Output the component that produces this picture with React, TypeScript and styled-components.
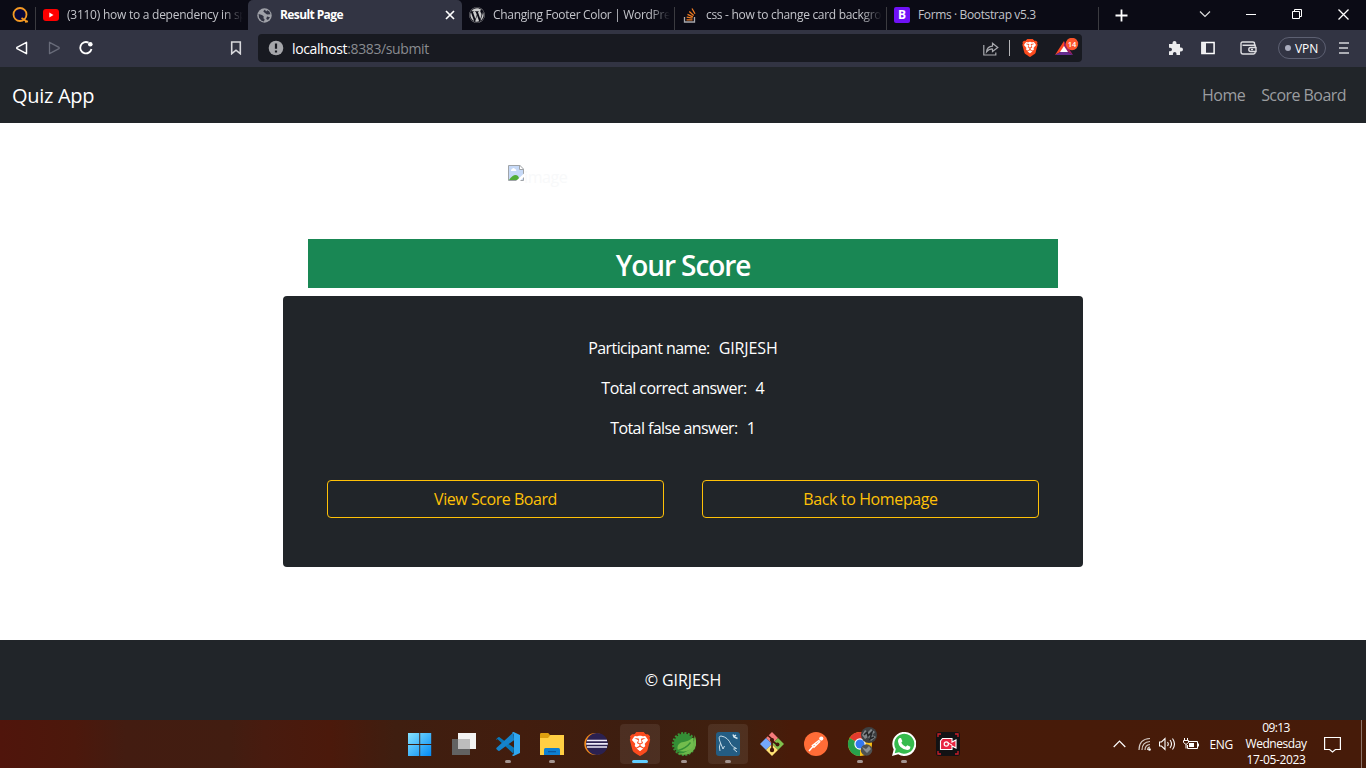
import React from "react";
import styled, { createGlobalStyle } from "styled-components";
import { FaWordpress } from "react-icons/fa";
import { SiBrave } from "react-icons/si";

const GlobalStyle = createGlobalStyle`
  * { box-sizing: border-box; }
  body { margin: 0; background: #fff; overflow: hidden; }
  p, h2 { margin: 0; }
  svg { display: block; flex: none; }
`;

const Screen = styled.div`
  width: 1366px;
  height: 768px;
  display: flex;
  flex-direction: column;
  font-family: "Open Sans", "Noto Sans", sans-serif;
`;

/* text with adjustable tracking */
const Label = styled.span<{ $track?: number }>`
  letter-spacing: ${(p) => p.$track ?? 0}px;
  white-space: nowrap;
`;

/* ---------- browser chrome ---------- */
const TabStrip = styled.div`
  height: 30px;
  flex: none;
  display: flex;
  background: #0b0b15;
  color: #c3c4ca;
  font-size: 12px;
`;
const PinnedTab = styled.div`
  width: 36px;
  padding: 7px 0 0 12px;
  display: flex;
  align-items: flex-start;
  background: linear-gradient(#3b3b40, #3b3b40) 35px 7px / 1px 23px no-repeat;
`;
const Tab = styled.div<{ $width: number; $active?: boolean; $divider?: boolean; $pad: number; $gap: number }>`
  width: ${(p) => p.$width}px;
  padding: 0 5px 0 ${(p) => p.$pad}px;
  display: flex;
  align-items: center;
  gap: ${(p) => p.$gap}px;
  border-radius: ${(p) => (p.$active ? "5px 5px 0 0" : "0")};
  color: ${(p) => (p.$active ? "#fff" : "inherit")};
  font-weight: ${(p) => (p.$active ? 700 : 400)};
  background: ${(p) =>
    p.$active
      ? "#323443"
      : p.$divider
      ? "linear-gradient(#3b3b40, #3b3b40) 100% 7px / 1px 23px no-repeat"
      : "none"};
`;
const TabTitle = styled.div<{ $track: number; $fade?: boolean }>`
  flex: 1;
  overflow: hidden;
  white-space: nowrap;
  line-height: 30px;
  letter-spacing: ${(p) => p.$track}px;
  mask-image: ${(p) => (p.$fade ? "linear-gradient(90deg, #000 calc(100% - 20px), transparent)" : "none")};
`;
const NewTab = styled.div`
  width: 83px;
  padding: 9px 0 0 16px;
`;
const WindowButton = styled.div`
  width: 46px;
  display: flex;
  align-items: center;
  justify-content: center;
  padding-bottom: 2px;
`;
const Toolbar = styled.div`
  height: 37px;
  flex: none;
  display: flex;
  align-items: center;
  padding: 0 16px 1px 14px;
  background: #323443;
`;
const ToolSlot = styled.div<{ $width: number }>`
  width: ${(p) => p.$width}px;
  display: flex;
`;
const AddressBar = styled.div`
  width: 824px;
  height: 28px;
  border-radius: 4px;
  background: #181a21;
  display: flex;
  align-items: center;
  padding: 0 2px 0 10px;
  font-size: 14px;
  color: #898b90;
  b { font-weight: 400; color: #fff; }
`;
const AddressText = styled.div`
  flex: 1;
  padding-left: 8px;
  letter-spacing: -0.38px;
`;
const AddressDivider = styled.i`
  width: 1px;
  height: 16px;
  background: #b5b5b8;
  margin: 0 11px 0 10px;
`;
const RewardsIcon = styled.svg`
  margin-left: 16px;
`;
const Vpn = styled.div`
  width: 48px;
  height: 22px;
  border: 1px solid #5d6072;
  border-radius: 11px;
  display: flex;
  align-items: center;
  gap: 4px;
  padding-left: 6px;
  color: #fff;
  font-size: 12px;
  letter-spacing: -0.1px;
  &::before {
    content: "";
    width: 6px;
    height: 6px;
    border-radius: 50%;
    background: #aaadbe;
  }
`;

/* ---------- page ---------- */
const Navbar = styled.nav`
  height: 56px;
  flex: none;
  display: flex;
  align-items: center;
  padding: 0 20px 0 12px;
  background: #212529;
  color: #fff;
`;
const Brand = styled.div`
  flex: 1;
  font-size: 20px;
  line-height: 30px;
  padding-top: 2px;
  letter-spacing: -0.3px;
`;
const NavLink = styled.a<{ $track: number }>`
  color: #9b9da0;
  font-size: 16px;
  line-height: 24px;
  margin-left: 16px;
  padding-bottom: 1px;
  letter-spacing: ${(p) => p.$track}px;
`;
const Main = styled.main`
  height: 517px;
  flex: none;
  display: flex;
  flex-direction: column;
  align-items: center;
  padding-top: 42px;
`;
const BrokenImage = styled.div`
  width: 350px;
  height: 74px;
  display: flex;
  align-items: flex-start;
  color: #f8f9fa;
  font-size: 16px;
  line-height: 24px;
`;
const ScoreTitle = styled.h2`
  width: 750px;
  height: 49px;
  background: #198754;
  color: #fff;
  text-align: center;
  font-size: 28px;
  font-weight: 600;
  line-height: 53px;
  letter-spacing: -1.1px;
`;
const Card = styled.section`
  width: 800px;
  height: 271px;
  margin-top: 8px;
  padding: 40px 44px 0;
  border-radius: 4px;
  background: #212529;
  color: #fff;
  font-size: 16px;
`;
const ResultLine = styled.p<{ $track: number }>`
  height: 40px;
  line-height: 24px;
  text-align: center;
  letter-spacing: ${(p) => p.$track}px;
  span { margin-left: 9px; letter-spacing: -0.1px; }
`;
const Actions = styled.div`
  display: flex;
  justify-content: space-between;
  padding-top: 24px;
`;
const OutlineButton = styled.button<{ $track: number }>`
  width: 337px;
  height: 38px;
  padding: 0 0 1px;
  border: 1px solid #ffc107;
  border-radius: 4px;
  background: transparent;
  color: #ffc107;
  font: 16px/24px "Open Sans", sans-serif;
  letter-spacing: ${(p) => p.$track}px;
`;
const Footer = styled.footer`
  height: 80px;
  flex: none;
  background: #212529;
  color: #fff;
  text-align: center;
  font-size: 16px;
  line-height: 80px;
  letter-spacing: -0.08px;
`;

/* ---------- taskbar ---------- */
const Taskbar = styled.div`
  height: 48px;
  flex: none;
  display: flex;
  justify-content: space-between;
  color: #fff;
  font-size: 12px;
  background: linear-gradient(90deg, #50150c 0, #4c180c 75px, #431c11 125px, #421d11 230px, #481b0f 265px, #4b190b 330px, #3f1e10 395px, #421d0e 520px, #3d1e10 640px, #40200e 735px, #481b09 790px, #461b09 1366px);
`;
const Apps = styled.div`
  display: flex;
  padding-left: 398px;
`;
const AppSlot = styled.div<{ $open?: boolean; $active?: boolean; $tile?: boolean }>`
  width: 40px;
  height: 40px;
  margin: 4px 2px;
  border-radius: 4px;
  display: flex;
  flex-direction: column;
  align-items: center;
  padding-top: 8px;
  background: ${(p) => (p.$tile ? "rgba(255,255,255,0.08)" : "transparent")};
  &::after {
    content: "";
    margin-top: 4px;
    width: ${(p) => (p.$active ? 16 : 6)}px;
    height: 3px;
    border-radius: 1.5px;
    background: ${(p) => (p.$active ? "#60cdff" : p.$open ? "#a3948f" : "transparent")};
  }
`;
const Tray = styled.div`
  display: flex;
  align-items: center;
`;
const TrayIcon = styled.div<{ $right: number }>`
  margin-right: ${(p) => p.$right}px;
`;
const Clock = styled.div`
  width: 64px;
  margin: 0 16px 0 11px;
  display: flex;
  flex-direction: column;
  align-items: center;
  line-height: 16px;
`;
const ShowDesktop = styled.i`
  width: 5px;
  height: 48px;
  margin-left: 20px;
  border-left: 1px solid #8c736a;
`;

const Brave = ({ size }: { size: number }) => (
  <svg width={size} height={size} viewBox="0 0 24 24">
    <path d="M7 2h10l4 5-3 11-6 4-6-4L3 7z" fill="#fff" />
    <SiBrave size={24} color="#fb4b1e" />
  </svg>
);

const QIcon = () => (
  <svg width="17" height="16" viewBox="0 0 17 16">
    <circle cx="8" cy="7.5" r="6.5" fill="#07073a" stroke="#f59a23" strokeWidth="1.8" />
    <path d="M9.5 11 15.5 15M13 14.8l3-.4" stroke="#f59a23" strokeWidth="1.8" />
  </svg>
);

const Globe = () => (
  <svg width="15" height="15" viewBox="0 0 15 15">
    <circle cx="7.5" cy="7.5" r="7.2" fill="#9fa1a8" />
    <path d="M8 1.4 6.2 3.2 8 5 10 6.5 13.5 6.3 12.4 3.4 10.4 2.2 9 3.5zM1.6 6 5 7 6.8 8.4 6.4 10.2 7.6 11.3 7 13.4 4.5 12.7 2 9.7zM10 8.4 13 9.2 11 12 9.2 11z" fill="#323443" />
  </svg>
);

const Bootstrap = styled.div`
  width: 16px;
  height: 16px;
  border-radius: 2px;
  background: #7012f7;
  color: #fff;
  font-size: 12px;
  line-height: 16px;
  font-weight: 700;
  text-align: center;
`;

const VSCode = () => (
  <svg width="24" height="24" viewBox="0 0 24 24">
    <path d="M1.3 7.1 17.5 21.8 18 15.8 3.2 5.1Q2.5 4.9 1.9 5.5L.3 7Q0 7.5.3 8z" fill="#0877b9" />
    <path d="M.3 16 17.5.2 18 8.2 3.2 18.9Q2.5 19.1 1.9 18.5L.3 17Z" fill="#1583cb" />
    <path d="M17.6 0 24 3V21L17.6 24Q16.4 24 16 22.7 18 23 18 21V3Q18 1 16 1.3 16.4 0 17.6 0z" fill="#2fa7f1" />
  </svg>
);

const apps: { name: string; open?: boolean; active?: boolean; tile?: boolean; icon: React.ReactNode }[] = [
  {
    name: "start",
    icon: (
      <svg width="24" height="24" viewBox="0 0 24 24">
        <defs>
          <linearGradient id="win" x1="0" y1="0" x2="24" y2="24" gradientUnits="userSpaceOnUse">
            <stop stopColor="#8ae5ff" /><stop offset="1" stopColor="#0088f4" />
          </linearGradient>
        </defs>
        <path d="M0 1h11.3v11H0zM12.2 1h11v11h-11zM0 13h11.3v11H0zM12.2 13h11v11h-11z" fill="url(#win)" />
      </svg>
    ),
  },
  {
    name: "tasks",
    icon: (
      <svg width="24" height="24" viewBox="0 0 24 24">
        <path d="M6 1h18v16H6z" fill="#f3f3f3" />
        <path d="M0 7h18v16H0z" fill="#626262" />
        <path d="M6 7h12v10H6z" fill="#bdbdbd" />
      </svg>
    ),
  },
  { name: "code", open: true, icon: <VSCode /> },
  {
    name: "files",
    open: true,
    icon: (
      <svg width="24" height="24" viewBox="0 0 24 24">
        <path d="M0 2.2Q0 1 1.2 1h7L10 3h13v5H0z" fill="#dda010" />
        <path d="M0 6h8l2.5-3H24v20H0z" fill="#ffcf43" />
        <path d="M4 23v-5.5Q4 16 5.5 16h13q1.5 0 1.5 1.5V23z" fill="#0d7fd1" />
        <path d="M8 19h8v1.3H8z" fill="#0b579d" />
      </svg>
    ),
  },
  {
    name: "eclipse",
    icon: (
      <svg width="24" height="24" viewBox="0 0 24 24">
        <circle cx="11.3" cy="12" r="11" fill="#f28a1c" />
        <circle cx="13" cy="12" r="11" fill="#2b2150" />
        <path d="M3 8.5h20M2.3 11.8h21.5M3 15h20" stroke="#eeeaf7" strokeWidth="1.7" />
      </svg>
    ),
  },
  { name: "brave", open: true, active: true, tile: true, icon: <Brave size={24} /> },
  {
    name: "spring",
    open: true,
    icon: (
      <svg width="24" height="24" viewBox="0 0 24 24">
        <circle cx="12" cy="12" r="10.8" fill="none" stroke="#389536" strokeWidth="2.4" strokeDasharray="2 1.4" />
        <circle cx="12" cy="12" r="10.4" fill="#348f36" />
        <path d="M22.5 3Q26.5 13 21 19 14 25.5 4.5 21 11 22.5 17 18 23 12 22.5 3z" fill="#6cb64a" />
        <path d="M21 5.5Q23 13 19 17 14 21 6 18.5 4 13 9 10.5 17 9.5 21 5.5z" fill="#72bd4d" />
        <path d="M6 18.5Q14 16.5 18.5 10.5" stroke="#348f36" strokeWidth="1.3" fill="none" />
      </svg>
    ),
  },
  {
    name: "workbench",
    open: true,
    tile: true,
    icon: (
      <svg width="24" height="24" viewBox="0 0 24 24">
        <rect width="24" height="24" rx="3" fill="#245d83" />
        <path d="M4 19Q2.5 15 4.5 11 1.5 4 5 4 12 5 15 12.5 17 15 20.5 16.5L17.5 17 21 20M4.5 11 7 17 8.5 14" fill="none" stroke="#c5dbe7" strokeWidth="1" />
        <path d="M17 2.5 18 5 21.5 6.5M20 3 17.5 5" stroke="#d7e7ef" strokeWidth="1.4" fill="none" />
      </svg>
    ),
  },
  {
    name: "git",
    icon: (
      <svg width="24" height="24" viewBox="0 0 24 24">
        <path d="M12 0 18 6 12 12 6 6z" fill="#f47b7b" />
        <path d="M18 6 24 12 18 18 12 12z" fill="#7fc04d" />
        <path d="M6 6 12 12 6 18 0 12z" fill="#74a7fa" />
        <path d="M12 12 18 18 12 24 6 18z" fill="#ffe274" />
        <path d="M8 3.5 12 7V18M12 9l6 4" stroke="#421509" strokeWidth="1.6" fill="none" />
        <g fill="#421509"><circle cx="12" cy="8" r="2.1" /><circle cx="12" cy="18" r="2.2" /><circle cx="17.5" cy="12.5" r="2" /></g>
      </svg>
    ),
  },
  {
    name: "postman",
    icon: (
      <svg width="24" height="24" viewBox="0 0 24 24">
        <circle cx="12" cy="12" r="12" fill="#ff6c37" />
        <circle cx="17.3" cy="6.6" r="2.1" fill="#fff" />
        <path d="M15.5 8 8.4 13.5 10 15.2 16.2 9.3M9 14.5 5 19M10.5 12.5 12.5 13" stroke="#fff" strokeWidth="1.5" fill="none" />
      </svg>
    ),
  },
  {
    name: "chrome",
    open: true,
    icon: (
      <svg width="24" height="24" viewBox="0 0 24 24" overflow="visible">
        <circle cx="12" cy="12" r="12" fill="#fbc116" />
        <path d="M12 12 1.6 6A12 12 0 0 1 22.4 6z" fill="#e33b2e" />
        <path d="M12 12 1.6 6A12 12 0 0 0 12 24z" fill="#27a04b" />
        <circle cx="12" cy="12" r="5.7" fill="#fff" />
        <circle cx="12" cy="12" r="4.5" fill="#3478f0" />
        <circle cx="21" cy="3" r="8" fill="#3e4042" />
        <path d="M14 3 17-2 20 0 23-3 27 0 24 3 28 5 23 9 20 5 17 7z" fill="#82878a" />
        <path d="m16 3 3-3 1 4 4-4-2 7 4-2" stroke="#252628" strokeWidth="1.6" fill="none" />
        <circle cx="18.5" cy="18" r="5.8" fill="#505252" />
        <path d="m14 15 4 2 3-3 2 3-4 4-3-3" fill="#8c9295" />
      </svg>
    ),
  },
  {
    name: "whatsapp",
    open: true,
    icon: (
      <svg width="24" height="24" viewBox="0 0 24 24">
        <path d="M0 24 1.7 17.6A12 12 0 1 1 6.2 22.3z" fill="#fff" />
        <path d="M2.7 21.3 3.8 17A10 10 0 1 1 7 20.2z" fill="#35bb4d" />
        <path d="M7.2 6.2 9 6 10.4 9.2 9.3 10.8Q10.8 13.8 13.8 14.8L15.3 13.3 18.4 14.8Q18.3 18 15.2 18 7 17 6 9.5 5.8 7.5 7.2 6.2z" fill="#fff" />
      </svg>
    ),
  },
  {
    name: "recorder",
    icon: (
      <svg width="24" height="24" viewBox="0 0 24 24">
        <rect width="24" height="24" rx="3" fill="#121214" />
        <path d="M2 5V2h3M19 2h3v3M22 19v3h-3M5 22H2v-3" stroke="#cc1e2a" fill="none" strokeWidth="1.3" />
        <path d="M6.5 6.5H16V10L20 8V16L16 14V17.5H4.5V9z" fill="#e82641" stroke="#fff" strokeWidth="1.1" />
        <circle cx="10.3" cy="12" r="2.1" fill="none" stroke="#fff" strokeWidth="1.2" />
        <path d="m12 11 4 2" stroke="#fff" />
      </svg>
    ),
  },
];

const line = { fill: "none", stroke: "#fff", strokeWidth: 1 };

export default function App() {
  return (
    <Screen>
      <GlobalStyle />
      <TabStrip>
        <PinnedTab><QIcon /></PinnedTab>
        <Tab $width={212} $pad={7} $gap={8}>
          <svg width="16" height="12" viewBox="0 0 16 12">
            <rect width="16" height="12" rx="3" fill="#f00" /><path d="M6.3 3.5v5l4.2-2.5z" fill="#fff" />
          </svg>
          <TabTitle $track={-0.25} $fade>(3110) how to a dependency in spring</TabTitle>
        </Tab>
        <Tab $width={214} $pad={9} $gap={8} $active>
          <Globe />
          <TabTitle $track={-0.6}>Result Page</TabTitle>
          <svg width="14" height="10" viewBox="0 0 14 10"><path d="m3 1 8 8M11 1 3 9" stroke="#fff" strokeWidth="1.7" /></svg>
        </Tab>
        <Tab $width={213} $pad={7} $gap={8} $divider>
          <FaWordpress size={16} color="#c9c9c9" />
          <TabTitle $track={-0.32} $fade>Changing Footer Color | WordPress.com</TabTitle>
        </Tab>
        <Tab $width={212} $pad={8} $gap={8} $divider>
          <svg width="15" height="16" viewBox="0 0 15 16">
            <path d="M1.5 10v5h10v-5" stroke="#a9a9ad" strokeWidth="1.3" fill="none" />
            <path d="M3.5 12.8h6M3.7 10.2l5.8 1M4.5 7.4l5.4 2.4M6.3 4.5l4.4 4M9 1.5l3 5.2" stroke="#ed7b22" strokeWidth="1.3" />
          </svg>
          <TabTitle $track={-0.3} $fade>css - how to change card background color</TabTitle>
        </Tab>
        <Tab $width={212} $pad={7} $gap={8} $divider>
          <Bootstrap>B</Bootstrap>
          <TabTitle $track={-0.37}>Forms · Bootstrap v5.3</TabTitle>
        </Tab>
        <NewTab>
          <svg width="13" height="13" viewBox="0 0 13 13"><path d="M6.5.5v12M.5 6.5h12" stroke="#fff" strokeWidth="1.8" /></svg>
        </NewTab>
        <WindowButton><svg width="12" height="12"><path d="m1 3.5 5 5 5-5" {...line} strokeWidth="1.2" stroke="#ddd" /></svg></WindowButton>
        <WindowButton><svg width="10" height="12"><path d="M0 6.5h10" {...line} /></svg></WindowButton>
        <WindowButton><svg width="11" height="11"><path d="M.5 2.5h7v7h-7zM2.5 2.5v-2h7v7h-2" {...line} /></svg></WindowButton>
        <WindowButton><svg width="11" height="11"><path d="m.5.5 10 10M10.5.5l-10 10" {...line} strokeWidth="1.3" /></svg></WindowButton>
      </TabStrip>
      <Toolbar>
        <ToolSlot $width={33}><svg width="16" height="14"><path d="M12.5 1.3v11.4L3 7.7Q2.4 7 3 6.3z" {...line} strokeWidth="1.5" strokeLinejoin="round" /></svg></ToolSlot>
        <ToolSlot $width={31}><svg width="16" height="14"><path d="M2.5 1.3v11.4l9.5-5q.6-.7 0-1.4z" {...line} stroke="#686b79" strokeWidth="1.3" strokeLinejoin="round" /></svg></ToolSlot>
        <ToolSlot $width={152}>
          <svg width="16" height="16"><path d="M10.5 2.6A5.7 5.7 0 1 0 13.5 9" {...line} strokeWidth="1.8" /><circle cx="12.3" cy="4.3" r="2.3" fill="#fff" /></svg>
        </ToolSlot>
        <ToolSlot $width={28}><svg width="12" height="14"><path d="M1.7 1h8.6v11.7L6 9.2l-4.3 3.5z" {...line} stroke="#d8d8dc" strokeWidth="1.6" /></svg></ToolSlot>
        <AddressBar>
          <svg width="16" height="16" viewBox="0 0 16 16"><circle cx="8" cy="8" r="7.3" fill="#a5a6aa" /><path d="M8 3.5v5.3M8 10.5v2" stroke="#181a21" strokeWidth="2.2" /></svg>
          <AddressText><b>localhost</b>:8383/submit</AddressText>
          <svg width="16" height="15" viewBox="0 0 16 15">
            <path d="M.8 4v10h12v-2.5M3.5 11Q4 5.7 9.5 5.2V2.3l5.3 4.2-5.3 4V8Q6 7.7 3.5 11z" fill="none" stroke="#a9aaaf" strokeWidth="1.2" />
          </svg>
          <AddressDivider />
          <Brave size={18} />
          <RewardsIcon width="25" height="20" viewBox="0 0 25 20">
            <path d="M9 3 0 17l9-5z" fill="#ff4724" /><path d="m9 3 9 14-9-5z" fill="#9e1f63" /><path d="M0 17h18l-9-5z" fill="#662d91" /><path d="m9 8-4 6h8z" fill="#fff" />
            <circle cx="17" cy="6" r="6.2" fill="#fb542b" />
            <text x="17" y="8.8" textAnchor="middle" fontSize="7.5" fontWeight="600" fill="#fff">14</text>
          </RewardsIcon>
        </AddressBar>
        <ToolSlot $width={86} />
        <ToolSlot $width={33}>
          <svg width="16" height="16" viewBox="0 0 16 16"><path d="M1 4h3.5V3a2 2 0 0 1 4 0v1H12v3.5h1a2 2 0 0 1 0 4h-1V15H8.5v-1.2a1.8 1.8 0 0 0-3.6 0V15H1v-3.7h1.2a1.8 1.8 0 0 0 0-3.6H1z" fill="#ececee" /></svg>
        </ToolSlot>
        <ToolSlot $width={39}>
          <svg width="14" height="14"><rect x=".9" y="1.5" width="12.2" height="11" {...line} strokeWidth="1.5" /><path d="M1 1.5h4v11H1z" fill="#ececee" /></svg>
        </ToolSlot>
        <ToolSlot $width={38}>
          <svg width="17" height="14" viewBox="0 0 17 14">
            <path d="M14.5 4V2.2Q14.5 1 13 1H2.5Q1 1 1 2.5v8.3Q1 13 3 13h10.5q1.7 0 1.7-1.7V4.2H2.5" {...line} stroke="#dedee2" strokeWidth="1.4" />
            <path d="M16 6.5h-5.2a2 2 0 0 0 0 4H16z" fill="#323443" stroke="#dedee2" strokeWidth="1.4" /><path d="M11 8.5h2" stroke="#dedee2" strokeWidth="1.4" />
          </svg>
        </ToolSlot>
        <Vpn>VPN</Vpn>
        <ToolSlot $width={23}>
          <svg width="23" height="14"><path d="M13 2h10M13 7h9M13 12h10" stroke="#d5d5da" strokeWidth="1.6" /></svg>
        </ToolSlot>
      </Toolbar>

      <Navbar>
        <Brand>Quiz App</Brand>
        <NavLink $track={-0.55}>Home</NavLink>
        <NavLink $track={-0.55}>Score Board</NavLink>
      </Navbar>
      <Main>
        <BrokenImage>
          <svg width="16" height="16" viewBox="0 0 16 16">
            <path d="M.5.5h11l4 4v11H.5z" fill="#c6d9f7" stroke="#a0a4a8" />
            <path d="M3 6q-.4-1.5 1-2 1.5-1.8 3 0 1.5 0 1.3 2z" fill="#fff" />
            <path d="M1 15q5-7 9-4l2 4z" fill="#52ad37" />
            <path d="M11.5 0v4.5H16z" fill="#fff" stroke="#a0a4a8" />
            <path d="m8 16 8-7.5V12l-4 4z" fill="#fff" />
          </svg>
          <Label $track={-0.4}>image</Label>
        </BrokenImage>
        <ScoreTitle>Your Score</ScoreTitle>
        <Card>
          <ResultLine $track={-0.6}>Participant name:<span>GIRJESH</span></ResultLine>
          <ResultLine $track={-0.54}>Total correct answer:<span>4</span></ResultLine>
          <ResultLine $track={-0.6}>Total false answer:<span>1</span></ResultLine>
          <Actions>
            <OutlineButton $track={-0.45}>View Score Board</OutlineButton>
            <OutlineButton $track={-0.38}>Back to Homepage</OutlineButton>
          </Actions>
        </Card>
      </Main>
      <Footer>© GIRJESH</Footer>

      <Taskbar>
        <Apps>
          {apps.map((a) => (
            <AppSlot key={a.name} $open={a.open} $active={a.active} $tile={a.tile}>{a.icon}</AppSlot>
          ))}
        </Apps>
        <Tray>
          <TrayIcon $right={12}><svg width="13" height="8"><path d="m.7 7 5.8-5.8L12.3 7" {...line} strokeWidth="1.2" /></svg></TrayIcon>
          <TrayIcon $right={7}>
            <svg width="14" height="14" viewBox="0 0 14 14">
              <path d="M1 13Q1 2 12 1.5M4 13Q4 5 12 4.5M7 13q0-5 5-5.5M9.5 13q0-2.7 2.5-3" {...line} stroke="#d6cac4" strokeWidth="1.2" /><circle cx="11.5" cy="12.5" r="1.3" fill="#fff" />
            </svg>
          </TrayIcon>
          <TrayIcon $right={7}>
            <svg width="17" height="14" viewBox="0 0 17 14"><path d="M.5 5h2L6 1.5v11L2.5 9h-2zM8.5 5q1.5 2 0 4M11 3q3 4 0 8M13.5 1.5q4 5.5 0 11" {...line} strokeWidth="1.1" /></svg>
          </TrayIcon>
          <TrayIcon $right={10}>
            <svg width="16" height="14" viewBox="0 0 16 14"><path d="M6 4.5h8.5v7h-10V8M15.5 6.5v3M1.5 1v2M4.5 1v2M.5 3.5h5v2L3 7.5.5 5.5zM3 7.5v4" {...line} /><path d="M6 6h5v4H6z" fill="#fff" /></svg>
          </TrayIcon>
          <Label $track={-0.3}>ENG</Label>
          <Clock>
            <Label $track={-0.6}>09:13</Label>
            <Label $track={-0.45}>Wednesday</Label>
            <Label $track={-0.35}>17-05-2023</Label>
          </Clock>
          <svg width="17" height="17"><path d="M.6 1.5h15.8v12h-5L8.5 16l-2.9-2.5h-5z" {...line} strokeWidth="1.2" /></svg>
          <ShowDesktop />
        </Tray>
      </Taskbar>
    </Screen>
  );
}
